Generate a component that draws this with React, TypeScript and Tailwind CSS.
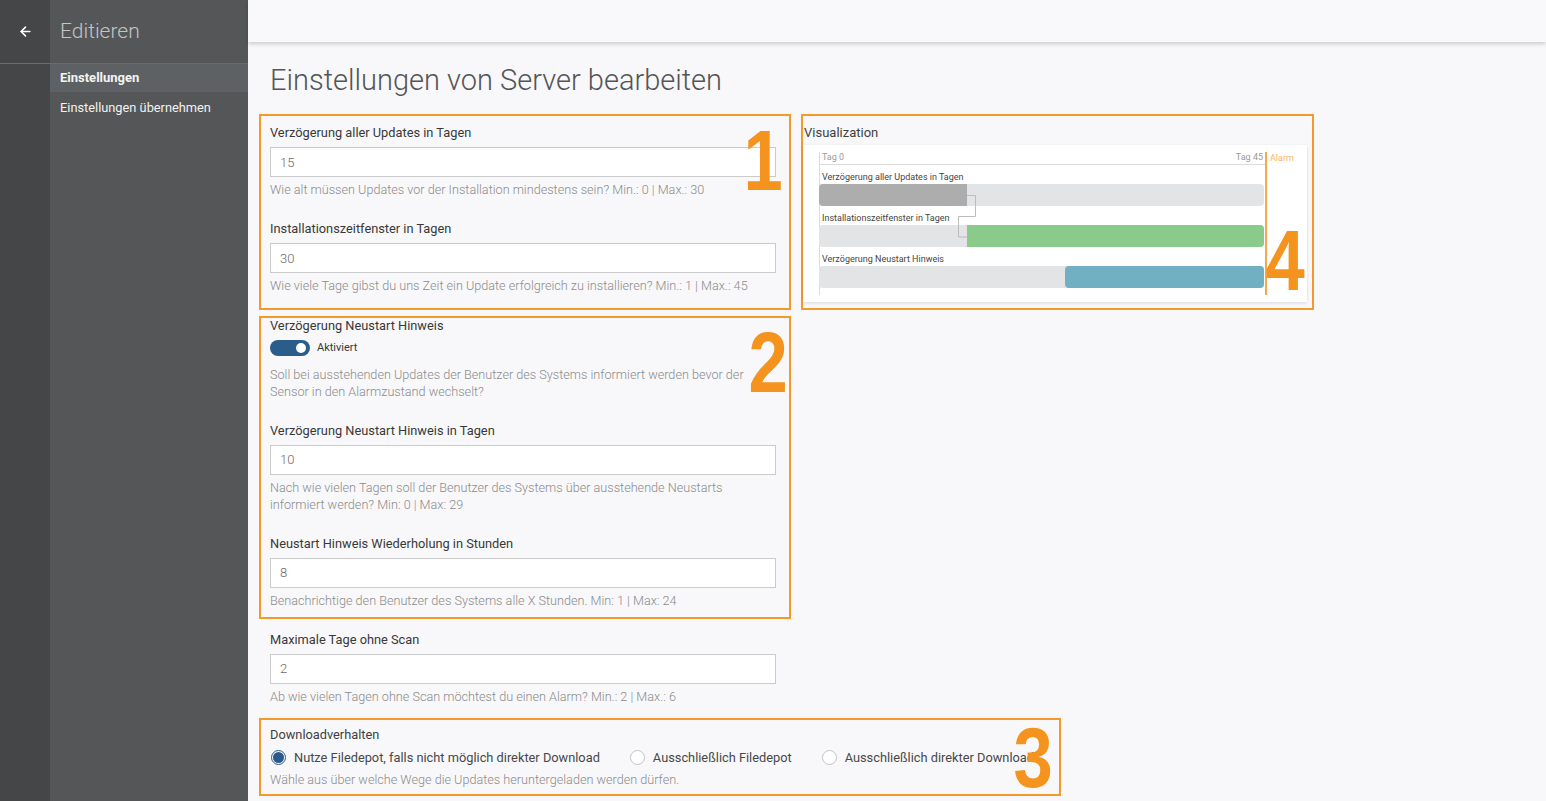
import { ArrowLeft } from "lucide-react";

const bigNum =
  "absolute origin-right scale-x-[0.82] leading-none font-bold text-[#f5931f] text-[86px] [font-family:'Liberation_Sans',Arial,sans-serif] pointer-events-none";

const helpText = "text-[12.65px] leading-[17px] font-light text-[#8b8b8b]";
const labelText = "text-[12.8px] text-[#383838]";

function Field({ label, value, help }: { label: string; value: string; help: string[] }) {
  return (
    <div>
      <div className={`leading-[18px] ${labelText}`}>{label}</div>
      <input
        readOnly
        value={value}
        className="mt-[5px] block h-[30px] w-[506px] border border-[#cbcbcb] bg-white px-[9px] text-[13px] font-light text-[#6a6a6a] outline-none"
      />
      <div className={`mt-[4px] ${helpText}`}>
        {help.map((h) => (
          <div key={h}>{h}</div>
        ))}
      </div>
    </div>
  );
}

function Radio({ checked, label }: { checked?: boolean; label: string }) {
  return (
    <div className="flex items-center gap-[8px]">
      <span
        className={`flex h-[15px] w-[15px] items-center justify-center rounded-full border ${
          checked ? "border-[#2a5b88]" : "border-[#c4c4c4] bg-white"
        }`}
      >
        {checked && <span className="h-[11px] w-[11px] rounded-full bg-[#2a5b88]" />}
      </span>
      <span className="text-[12.8px] text-[#484848]">{label}</span>
    </div>
  );
}

function Visualization() {
  return (
    <div className="mt-[3px] h-[157px] w-[504px] bg-white pl-[16px] shadow-[0_1px_3px_rgba(0,0,0,0.13)]">
      <div className="flex items-start">
        <div className="relative mt-[7px] w-[446px] border-l border-[#dcdcdc] pb-[7px]">
          <div className="flex h-[13px] items-center justify-between border-b border-[#dcdcdc] px-[2px] text-[9px] text-[#9a9a9a]">
            <span>Tag 0</span>
            <span>Tag 45</span>
          </div>
          <div className="mt-[6px] pl-[2px] text-[9px] leading-[12px] text-[#454545]">Verzögerung aller Updates in Tagen</div>
          <div className="-ml-px mt-[1px] flex h-[22px] w-[445px] rounded-[4px] bg-[#e3e4e6]">
            <div className="w-[148px] rounded-l-[4px] bg-[#adadad]" />
          </div>
          <div className="mt-[6px] pl-[2px] text-[9px] leading-[12px] text-[#454545]">Installationszeitfenster in Tagen</div>
          <div className="-ml-px mt-[1px] flex h-[22px] w-[445px] rounded-[4px] bg-[#e3e4e6]">
            <div className="w-[148px]" />
            <div className="flex-1 rounded-r-[4px] bg-[#8aca8b]" />
          </div>
          <div className="mt-[6px] pl-[2px] text-[9px] leading-[12px] text-[#454545]">Verzögerung Neustart Hinweis</div>
          <div className="-ml-px mt-[1px] flex h-[22px] w-[445px] rounded-[4px] bg-[#e3e4e6]">
            <div className="w-[246px]" />
            <div className="flex-1 rounded-[4px] bg-[#71afc2]" />
          </div>
          <svg className="absolute left-[137px] top-[42px]" width="20" height="44" viewBox="0 0 20 44" fill="none">
            <path d="M10 1.5H18.5V22.5H1.5V43H10" stroke="#bcbcbc" strokeWidth="1" />
          </svg>
        </div>
        <div className="mt-[7px] h-[143px] w-[2px] bg-[#f7a84c]" />
        <div className="mt-[7px] pl-[3px] text-[9px] leading-[12px] text-[#f6b36c]">Alarm</div>
      </div>
    </div>
  );
}

export default function App() {
  return (
    <div className="flex h-[801px] w-full overflow-hidden bg-[#f8f8fa] [font-family:Roboto,'Liberation_Sans',sans-serif]">
      {/* sidebar */}
      <div className="flex w-[248px] shrink-0 flex-col bg-[#555657]">
        <div className="flex h-[64px] border-b border-[#6a6b6c]">
          <div className="flex w-[50px] items-center justify-center bg-[#454647] text-white">
            <ArrowLeft size={15} strokeWidth={2.5} />
          </div>
          <div className="flex items-center pl-[10px] text-[21px] font-light text-[#c4c4c4]">Editieren</div>
        </div>
        <div className="flex flex-1">
          <div className="w-[50px] bg-[#454647]" />
          <div className="flex-1">
            <div className="flex h-[28px] items-center bg-[#5e6163] pl-[10px] text-[13px] font-bold text-[#f4f4f4]">
              Einstellungen
            </div>
            <div className="flex h-[29px] items-center pl-[10px] pt-[2px] text-[12.8px] text-[#f2f2f2]">
              Einstellungen übernehmen
            </div>
          </div>
        </div>
      </div>

      {/* main */}
      <div className="flex-1">
        <div className="h-[42px] bg-[#f9f9fb] shadow-[0_2px_4px_rgba(0,0,0,0.18)]" />
        <div className="pl-[11px]">
          <h1 className="mt-[20px] pl-[11px] text-[29px] leading-[36px] font-light text-[#555]">
            Einstellungen von Server bearbeiten
          </h1>
          <div className="mt-[16px] flex items-start gap-[10px]">
            <div className="w-[532px]">
              {/* box 1 */}
              <div className="relative border-2 border-[#f39a2b] pb-[14px] pl-[9px] pt-[8px]">
                <Field
                  label="Verzögerung aller Updates in Tagen"
                  value="15"
                  help={["Wie alt müssen Updates vor der Installation mindestens sein? Min.: 0 | Max.: 30"]}
                />
                <div className="mt-[22px]">
                  <Field
                    label="Installationszeitfenster in Tagen"
                    value="30"
                    help={["Wie viele Tage gibst du uns Zeit ein Update erfolgreich zu installieren? Min.: 1 | Max.: 45"]}
                  />
                </div>
                <span className={`${bigNum} right-[6px] top-[1px]`}>1</span>
              </div>

              {/* box 2 */}
              <div className="relative mt-[6px] border-2 border-[#f39a2b] pb-[8px] pl-[9px]">
                <div className={`leading-[16px] ${labelText}`}>Verzögerung Neustart Hinweis</div>
                <div className="mt-[6px] flex items-center gap-[7px]">
                  <span className="flex h-[16px] w-[40px] items-center justify-end rounded-full bg-[#2a5d8a] pr-[4px]">
                    <span className="h-[10px] w-[10px] rounded-full bg-white" />
                  </span>
                  <span className="text-[11px] text-[#383838]">Aktiviert</span>
                </div>
                <div className={`mt-[9px] w-[490px] ${helpText}`}>
                  Soll bei ausstehenden Updates der Benutzer des Systems informiert werden bevor der Sensor in den
                  Alarmzustand wechselt?
                </div>
                <div className="mt-[22px]">
                  <Field
                    label="Verzögerung Neustart Hinweis in Tagen"
                    value="10"
                    help={[
                      "Nach wie vielen Tagen soll der Benutzer des Systems über ausstehende Neustarts",
                      "informiert werden? Min: 0 | Max: 29",
                    ]}
                  />
                </div>
                <div className="mt-[22px]">
                  <Field
                    label="Neustart Hinweis Wiederholung in Stunden"
                    value="8"
                    help={["Benachrichtige den Benutzer des Systems alle X Stunden. Min: 1 | Max: 24"]}
                  />
                </div>
                <span className={`${bigNum} right-[1px] top-[1px]`}>2</span>
              </div>

              <div className="mt-[12px] pl-[11px]">
                <Field
                  label="Maximale Tage ohne Scan"
                  value="2"
                  help={["Ab wie vielen Tagen ohne Scan möchtest du einen Alarm? Min.: 2 | Max.: 6"]}
                />
              </div>
            </div>

            {/* box 4 */}
            <div className="relative h-[196px] w-[513px] border-2 border-[#f39a2b]">
              <div className="pl-[1px] pt-[8px] text-[13px] leading-[18px] text-[#3f3f3f]">Visualization</div>
              <Visualization />
              <span className={`${bigNum} right-[7px] top-[101px]`}>4</span>
            </div>
          </div>

          {/* box 3 */}
          <div className="relative mt-[13px] w-[802px] border-2 border-[#f39a2b] pb-[6px] pl-[9px] pt-[6px]">
            <div className="text-[12.8px] leading-[18px] text-[#3f3f3f]">Downloadverhalten</div>
            <div className="mt-[4px] flex h-[20px] items-center gap-[30px] pl-[1px]">
              <Radio checked label="Nutze Filedepot, falls nicht möglich direkter Download" />
              <Radio label="Ausschließlich Filedepot" />
              <Radio label="Ausschließlich direkter Download" />
            </div>
            <div className={`mt-[3px] ${helpText}`}>
              Wähle aus über welche Wege die Updates heruntergeladen werden dürfen.
            </div>
            <span className={`${bigNum} right-[6px] top-[-6px]`}>3</span>
          </div>
        </div>
      </div>
    </div>
  );
}
